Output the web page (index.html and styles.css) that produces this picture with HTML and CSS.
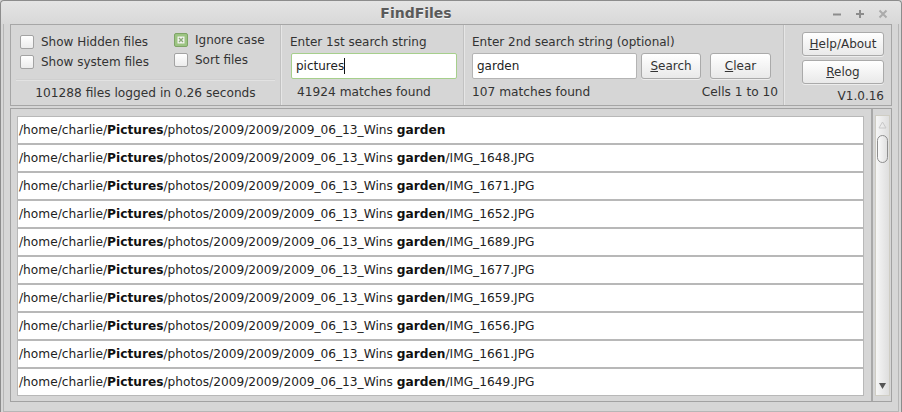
FILE: index.html
```html
<!DOCTYPE html>
<html lang="en">
<head>
  <meta charset="UTF-8" />
  <title>FindFiles</title>
  <link rel="stylesheet" href="styles.css">
</head>
<body>
  <div class="window">
    <div class="titlebar">
      <span class="title">FindFiles</span>
      <div class="controls">
        <svg width="10" height="10" viewBox="0 0 10 10"><path d="M1 5.5h8" stroke="#8c8c8c" stroke-width="2"/></svg>
        <svg width="10" height="10" viewBox="0 0 10 10"><path d="M1 5h8M5 1v8" stroke="#8c8c8c" stroke-width="2"/></svg>
        <svg width="10" height="10" viewBox="0 0 10 10"><path d="M1.5 1.5l7 7M8.5 1.5l-7 7" stroke="#ababab" stroke-width="2"/></svg>
      </div>
    </div>

    <div class="frame">
      <div class="panel">
        <div class="sec sec-opts">
          <div class="opts">
            <div class="col col-a">
              <label class="check"><span class="box"></span>Show Hidden files</label>
              <label class="check"><span class="box"></span>Show system files</label>
            </div>
            <div class="col col-b">
              <label class="check"><span class="box checked">
                <svg width="8" height="8" viewBox="0 0 8 8"><rect x="0.5" y="0.5" width="7" height="7" fill="#f4f4f0"/><path d="M2 2l4 4M6 2l-4 4" stroke="#8aa878" stroke-width="1.4"/></svg>
              </span>Ignore case</label>
              <label class="check"><span class="box"></span>Sort files</label>
            </div>
          </div>
          <div class="status center">101288 files logged in 0.26 seconds</div>
        </div>

        <div class="sec sec-first">
          <div class="label">Enter 1st search string</div>
          <div class="input focus">pictures<span class="caret"></span></div>
          <div class="status indent">41924 matches found</div>
        </div>

        <div class="sec sec-second">
          <div class="label">Enter 2nd search string (optional)</div>
          <div class="search-row">
            <div class="input second">garden</div>
            <button class="btn btn-search"><u>S</u>earch</button>
            <button class="btn btn-clear"><u>C</u>lear</button>
          </div>
          <div class="status split">
            <span>107 matches found</span>
            <span>Cells 1 to 10</span>
          </div>
        </div>

        <div class="sec sec-help">
          <button class="btn btn-side"><u>H</u>elp/About</button>
          <button class="btn btn-side"><u>R</u>elog</button>
          <div class="version">V1.0.16</div>
        </div>
      </div>

      <div class="list">
        <div class="rows">
          <div class="cell">/home/charlie/<b>Pictures</b>/photos/2009/2009/2009_06_13_Wins <b>garden</b></div>
          <div class="cell">/home/charlie/<b>Pictures</b>/photos/2009/2009/2009_06_13_Wins <b>garden</b>/IMG_1648.JPG</div>
          <div class="cell">/home/charlie/<b>Pictures</b>/photos/2009/2009/2009_06_13_Wins <b>garden</b>/IMG_1671.JPG</div>
          <div class="cell">/home/charlie/<b>Pictures</b>/photos/2009/2009/2009_06_13_Wins <b>garden</b>/IMG_1652.JPG</div>
          <div class="cell">/home/charlie/<b>Pictures</b>/photos/2009/2009/2009_06_13_Wins <b>garden</b>/IMG_1689.JPG</div>
          <div class="cell">/home/charlie/<b>Pictures</b>/photos/2009/2009/2009_06_13_Wins <b>garden</b>/IMG_1677.JPG</div>
          <div class="cell">/home/charlie/<b>Pictures</b>/photos/2009/2009/2009_06_13_Wins <b>garden</b>/IMG_1659.JPG</div>
          <div class="cell">/home/charlie/<b>Pictures</b>/photos/2009/2009/2009_06_13_Wins <b>garden</b>/IMG_1656.JPG</div>
          <div class="cell">/home/charlie/<b>Pictures</b>/photos/2009/2009/2009_06_13_Wins <b>garden</b>/IMG_1661.JPG</div>
          <div class="cell">/home/charlie/<b>Pictures</b>/photos/2009/2009/2009_06_13_Wins <b>garden</b>/IMG_1649.JPG</div>
        </div>
        <div class="scroll">
          <div class="track">
            <svg class="arrow" width="9" height="8" viewBox="0 0 9 8"><path d="M4.5 1L8 7H1z" fill="none" stroke="#c8c8c8"/></svg>
            <div class="thumb"></div>
            <div class="spacer"></div>
            <svg class="arrow" width="9" height="8" viewBox="0 0 9 8"><path d="M1 1h7L4.5 7z" fill="#555"/></svg>
          </div>
        </div>
      </div>
    </div>
  </div>
</body>
</html>
```

FILE: styles.css
```css
body {
  margin: 0;
  width: 902px;
  height: 412px;
  overflow: hidden;
  font-family: "DejaVu Sans", Verdana, sans-serif;
  font-size: 12px;
  color: #333;
  background: #d6d6d6;
}

.window {
  box-sizing: border-box;
  height: 412px;
  border: 1px solid #8c8c8c;
  border-bottom: none;
  border-radius: 4px 4px 0 0;
  background: #d6d6d6;
  display: flex;
  flex-direction: column;
}

.titlebar {
  height: 23px;
  flex: none;
  position: relative;
  display: flex;
  align-items: center;
  justify-content: center;
  padding-right: 70px;
  background: linear-gradient(to bottom, #e4e4e4, #d8d8d8);
  border-radius: 4px 4px 0 0;
}

.title {
  font-weight: bold;
  font-size: 14px;
  color: #5a5a5a;
  text-shadow: 0 1px 0 #f4f4f4;
  margin-top: 1px;
}

.controls {
  position: absolute;
  right: 13px;
  top: 8px;
  display: flex;
  gap: 13px;
}

.frame {
  flex: 1;
  margin: 0 2px;
  border: 1px solid #b6b6b6;
  border-top: none;
  padding: 0 6px;
  display: flex;
  flex-direction: column;
}

/* top panel */

.panel {
  height: 80px;
  border: 1px solid #a6a6a6;
  display: flex;
  flex: none;
}

.sec {
  border-right: 1px solid #c2c2c2;
  box-shadow: 1px 0 0 #e6e6e6;
  display: flex;
  flex-direction: column;
}

.sec-opts {
  width: 269px;
}

.opts {
  height: 55px;
  display: flex;
}

.col {
  display: flex;
  flex-direction: column;
}

.col-a {
  padding: 7px 0 0 9px;
  width: 154px;
}

.col-b {
  padding: 5px 0 0 0;
}

.check {
  height: 20px;
  display: flex;
  align-items: center;
  gap: 7px;
  white-space: nowrap;
}

.box {
  box-sizing: border-box;
  width: 14px;
  height: 14px;
  border: 1px solid #a3a3a3;
  border-radius: 2px;
  background: linear-gradient(to bottom, #ffffff, #ececec);
  display: flex;
  align-items: center;
  justify-content: center;
}

.box.checked {
  background: #9cc482;
  border-color: #7ea466;
}

.status {
  height: 24px;
  line-height: 24px;
  font-size: 12.2px;
  white-space: nowrap;
}

.sec-opts .status {
  border-top: 1px solid #e2e2e2;
  box-shadow: 0 -1px 0 #cfcfcf;
  margin: 0 5px;
}

.center {
  text-align: center;
}

.label {
  margin-top: 9px;
  height: 16px;
  line-height: 16px;
  white-space: nowrap;
}

.input {
  box-sizing: border-box;
  height: 26px;
  margin-top: 3px;
  border: 1px solid #b4b4b4;
  border-radius: 2px;
  background: #fff;
  padding-left: 4px;
  line-height: 24px;
  color: #222;
  display: flex;
  align-items: center;
}

.input.focus {
  border-color: #a6cf8c;
  margin-left: 1px;
  width: 166px;
}

.caret {
  width: 1px;
  height: 16px;
  background: #111;
}

.sec-first {
  width: 183px;
  padding-left: 9px;
  box-sizing: border-box;
}

.sec-first .status {
  margin-top: 1px;
  padding-left: 7px;
}

.sec-second {
  width: 320px;
  box-sizing: border-box;
  padding: 0 5px 0 8px;
}

.search-row {
  display: flex;
  align-items: flex-start;
}

.input.second {
  width: 165px;
}

.btn {
  box-sizing: border-box;
  font-family: inherit;
  font-size: 12px;
  color: #333;
  height: 26px;
  padding: 0;
  border: 1px solid #aaaaaa;
  border-radius: 3px;
  background: linear-gradient(to bottom, #ffffff, #e9e9e9);
  box-shadow: 0 1px 0 #ededed;
}

.btn-search {
  width: 60px;
  margin: 3px 0 0 4px;
}

.btn-clear {
  width: 61px;
  margin: 3px 0 0 9px;
}

.split {
  margin-top: 1px;
  display: flex;
  justify-content: space-between;
}

.sec-help {
  flex: 1;
  border-right: none;
  box-shadow: none;
  padding: 7px 0 0 18px;
  gap: 4px;
}

.btn-side {
  width: 82px;
  height: 24px;
}

.version {
  width: 82px;
  text-align: right;
  line-height: 16px;
}

/* result list */

.list {
  flex: none;
  height: 294px;
  margin-top: 2px;
  border: 1px solid #a2a2a2;
  box-sizing: border-box;
  display: flex;
}

.rows {
  flex: 1;
  padding: 7px 7px 0 6px;
}

.cell {
  height: 26px;
  line-height: 26px;
  font-size: 12.2px;
  border: 1px solid #b8b8b8;
  background: #fff;
  padding-left: 1px;
  color: #222;
  white-space: nowrap;
  overflow: hidden;
}

.cell b {
  color: #111;
}

.scroll {
  width: 15px;
  border-left: 2px solid #a8a8a8;
  padding: 6px 1px 5px 2px;
}

.track {
  box-sizing: border-box;
  height: 100%;
  width: 15px;
  border: 1px solid #cfcdc4;
  background: linear-gradient(to right, #f6f6f6, #dedede);
  display: flex;
  flex-direction: column;
  align-items: center;
}

.arrow {
  flex: none;
  margin: 5px 0;
}

.thumb {
  box-sizing: border-box;
  width: 11px;
  height: 28px;
  margin-top: 1px;
  border: 1px solid #8e8e8e;
  border-radius: 6px;
  background: linear-gradient(to right, #fafafa, #e0e0e0);
}

.spacer {
  flex: 1;
}
```
